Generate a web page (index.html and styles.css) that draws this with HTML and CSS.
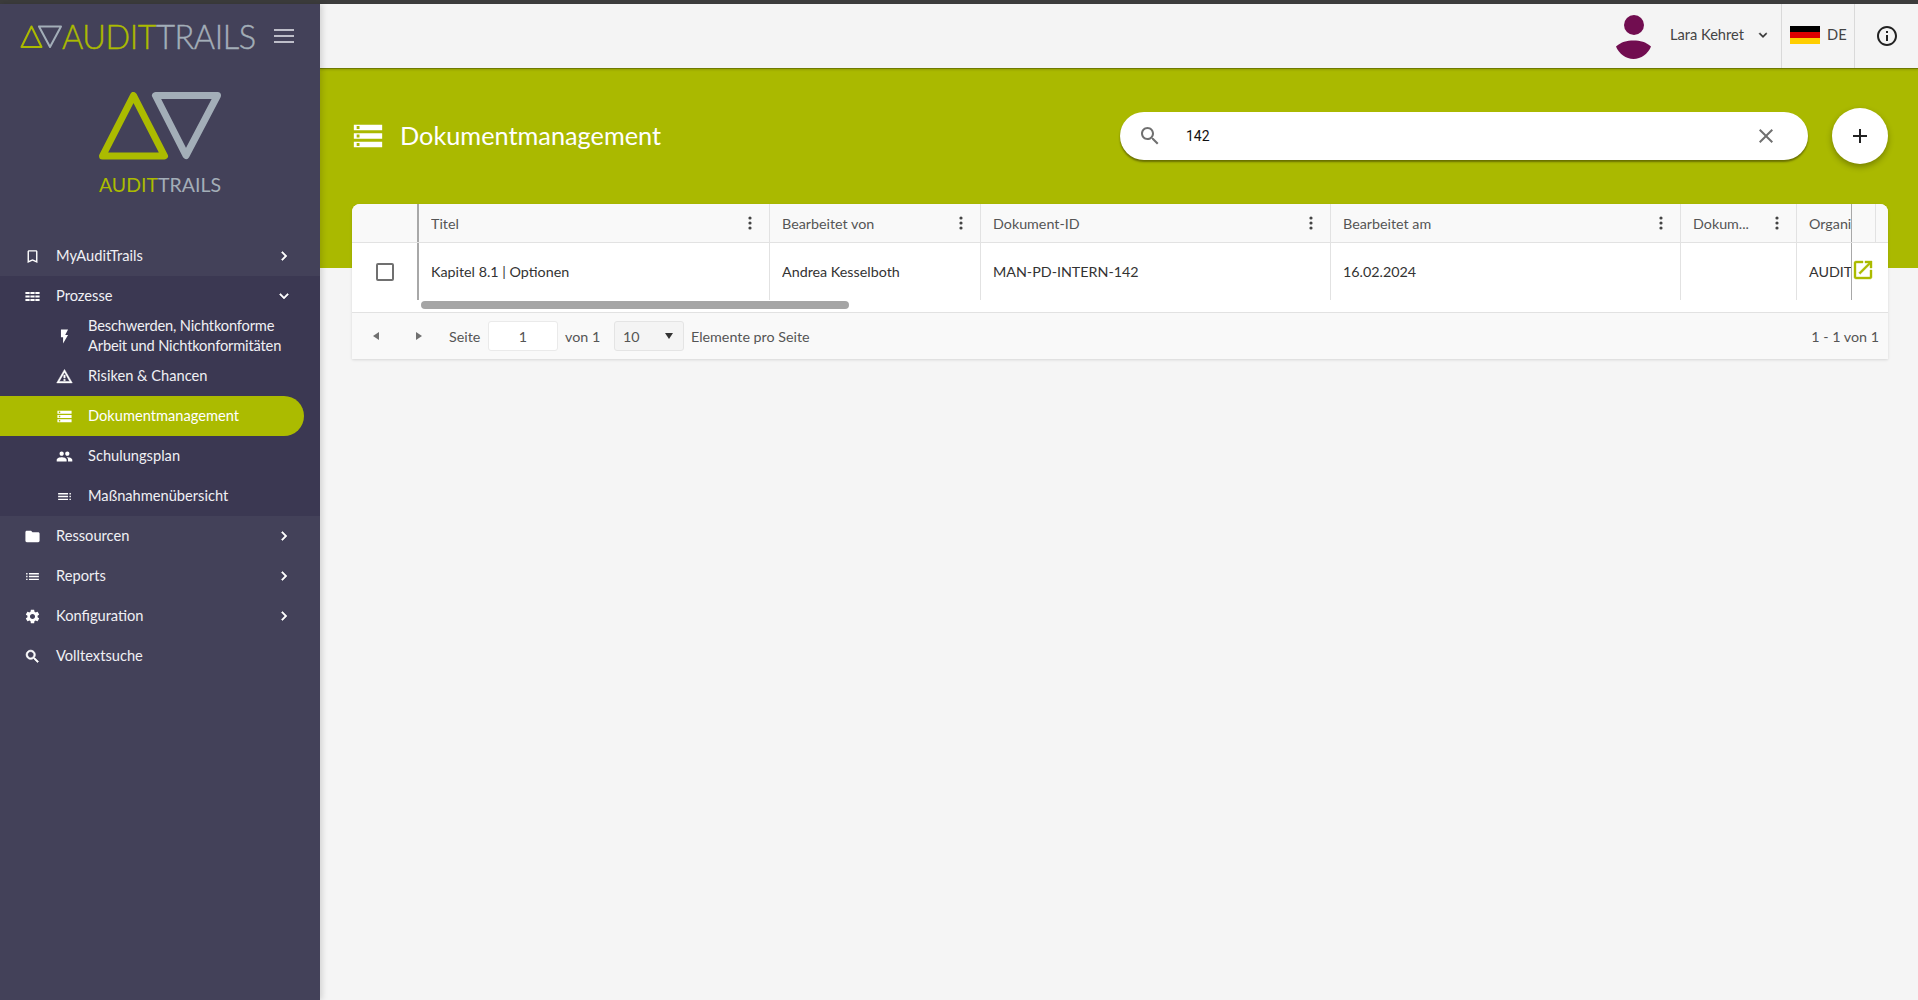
FILE: index.html
```html
<!DOCTYPE html>
<html lang="de">
<head>
<meta charset="utf-8">
<title>Dokumentmanagement</title>
<link rel="stylesheet" href="styles.css">
</head>
<body>
<svg class="defs" aria-hidden="true">
<symbol id="i-bookmark" viewBox="0 0 24 24"><path d="M17 3H7c-1.1 0-1.99.9-1.99 2L5 21l7-3 7 3V5c0-1.1-.9-2-2-2zm0 15l-5-2.18L7 18V5h10v13z"/></symbol>
<symbol id="i-right" viewBox="0 0 24 24"><path d="M10 6L8.59 7.41 13.17 12l-4.58 4.59L10 18l6-6z"/></symbol>
<symbol id="i-down" viewBox="0 0 24 24"><path d="M16.59 8.59L12 13.17 7.41 8.59 6 10l6 6 6-6z"/></symbol>
<symbol id="i-comfy" viewBox="0 0 24 24"><path d="M2 5.500h6v3H2zM9 5.500h6v3H9zM16 5.500h6v3h-6zM2 10.500h6v3H2zM9 10.500h6v3H9zM16 10.500h6v3h-6zM2 15.500h6v3H2zM9 15.500h6v3H9zM16 15.500h6v3h-6z"/></symbol>
<symbol id="i-flash" viewBox="0 0 24 24"><path d="M7 2v11h3v9l7-12h-4l4-8z"/></symbol>
<symbol id="i-warning" viewBox="0 0 24 24"><path d="M12 5.990L19.530 19H4.470L12 5.990M12 2L1 21h22L12 2zm1 14h-2v2h2v-2zm0-6h-2v4h2v-4z"/></symbol>
<symbol id="i-storage" viewBox="0 0 24 24"><path d="M2 20h20v-4H2v4zm2-3h2v2H4v-2zM2 4v4h20V4H2zm4 3H4V5h2v2zm-4 7h20v-4H2v4zm2-3h2v2H4v-2z"/></symbol>
<symbol id="i-people" viewBox="0 0 24 24"><path d="M16 11c1.66 0 2.99-1.34 2.99-3S17.66 5 16 5c-1.66 0-3 1.34-3 3s1.34 3 3 3zm-8 0c1.66 0 2.99-1.34 2.99-3S9.66 5 8 5C6.34 5 5 6.34 5 8s1.34 3 3 3zm0 2c-2.33 0-7 1.17-7 3.5V19h14v-2.5c0-2.33-4.67-3.5-7-3.5zm8 0c-.29 0-.62.02-.97.05 1.16.84 1.97 1.97 1.97 3.45V19h6v-2.5c0-2.33-4.67-3.5-7-3.5z"/></symbol>
<symbol id="i-list" viewBox="0 0 24 24"><path d="M3 13h2v-2H3v2zm0 4h2v-2H3v2zm0-8h2V7H3v2zm4 4h14v-2H7v2zm0 4h14v-2H7v2zM7 7v2h14V7H7z"/></symbol>
<symbol id="i-listr" viewBox="0 0 24 24"><path d="M21 13h-2v-2h2v2zm0 4h-2v-2h2v2zm0-8h-2V7h2v2zm-4 4H3v-2h14v2zm0 4H3v-2h14v2zM17 7v2H3V7h14z"/></symbol>
<symbol id="i-folder" viewBox="0 0 24 24"><path d="M10 4H4c-1.1 0-1.99.9-1.99 2L2 18c0 1.1.9 2 2 2h16c1.1 0 2-.9 2-2V8c0-1.1-.9-2-2-2h-8l-2-2z"/></symbol>
<symbol id="i-gear" viewBox="0 0 24 24"><path d="M19.14 12.94c.04-.3.06-.61.06-.94 0-.32-.02-.64-.07-.94l2.03-1.58c.18-.14.23-.41.12-.61l-1.92-3.32c-.12-.22-.37-.29-.59-.22l-2.39.96c-.5-.38-1.03-.7-1.62-.94l-.36-2.54c-.04-.24-.24-.41-.48-.41h-3.84c-.24 0-.43.17-.47.41l-.36 2.54c-.59.24-1.13.57-1.62.94l-2.39-.96c-.22-.08-.47 0-.59.22L2.74 8.87c-.12.21-.08.47.12.61l2.03 1.58c-.05.3-.09.63-.09.94s.02.64.07.94l-2.03 1.58c-.18.14-.23.41-.12.61l1.92 3.32c.12.22.37.29.59.22l2.39-.96c.5.38 1.03.7 1.62.94l.36 2.54c.05.24.24.41.48.41h3.84c.24 0 .44-.17.47-.41l.36-2.54c.59-.24 1.13-.56 1.62-.94l2.39.96c.22.08.47 0 .59-.22l1.92-3.32c.12-.22.07-.47-.12-.61l-2.01-1.58zM12 15.6c-1.98 0-3.6-1.62-3.6-3.6s1.62-3.6 3.6-3.6 3.6 1.62 3.6 3.6-1.62 3.6-3.6 3.6z"/></symbol>
<symbol id="i-search" viewBox="0 0 24 24"><path d="M15.5 14h-.79l-.28-.27C15.41 12.59 16 11.11 16 9.5 16 5.91 13.09 3 9.5 3S3 5.91 3 9.5 5.91 16 9.5 16c1.61 0 3.09-.59 4.23-1.57l.27.28v.79l5 4.99L20.49 19l-4.99-5zm-6 0C7.01 14 5 11.99 5 9.5S7.01 5 9.5 5 14 7.01 14 9.5 11.99 14 9.5 14z"/></symbol>
<symbol id="i-close" viewBox="0 0 24 24"><path d="M19 6.41L17.59 5 12 10.59 6.41 5 5 6.41 10.59 12 5 17.59 6.41 19 12 13.41 17.59 19 19 17.59 13.41 12z"/></symbol>
<symbol id="i-add" viewBox="0 0 24 24"><path d="M19 13h-6v6h-2v-6H5v-2h6V5h2v6h6v2z"/></symbol>
<symbol id="i-info" viewBox="0 0 24 24"><path d="M11 7h2v2h-2zm0 4h2v6h-2zm1-9C6.48 2 2 6.48 2 12s4.48 10 10 10 10-4.48 10-10S17.52 2 12 2zm0 18c-4.41 0-8-3.59-8-8s3.59-8 8-8 8 3.59 8 8-3.59 8-8 8z"/></symbol>
<symbol id="i-open" viewBox="0 0 24 24"><path d="M19 19H5V5h7V3H5c-1.11 0-2 .9-2 2v14c0 1.1.89 2 2 2h14c1.1 0 2-.9 2-2v-7h-2v7zM14 3v2h3.59l-9.83 9.83 1.41 1.41L19 6.41V10h2V3h-7z"/></symbol>
<symbol id="i-more" viewBox="0 0 16 16"><circle cx="8" cy="3" r="1.6"/><circle cx="8" cy="8" r="1.6"/><circle cx="8" cy="13" r="1.6"/></symbol>
</svg>

<div class="topline"></div>
<div class="app">
  <aside class="sidebar">
    <div class="brand">
      <svg class="brand-mark" viewBox="0 0 42 24"><path class="tri-g" d="M11.5 1.5 21.5 22H1.5Z"/><path class="tri-s" d="M19 1.5H41L30 22Z"/></svg>
      <div class="brand-word"><span class="w-g">AUDIT</span><span class="w-s">TRAILS</span></div>
      <svg class="burger" viewBox="0 0 20 14"><path d="M0 1h20M0 7h20M0 13h20"/></svg>
    </div>
    <div class="logo">
      <svg class="logo-mark" viewBox="0 0 122 68"><path class="big-g" d="M34.500 3.500 65.500 64H3.500Z"/><path class="big-s" d="M56.500 3.500H118.500L87 63.500Z"/></svg>
      <div class="logo-word"><span class="w-g">AUDIT</span><span class="w-s">TRAILS</span></div>
    </div>
    <nav class="nav">
      <a class="item"><svg class="ico"><use href="#i-bookmark"/></svg><span class="label">MyAuditTrails</span><svg class="chev"><use href="#i-right"/></svg></a>
      <div class="group">
        <a class="item"><svg class="ico"><use href="#i-comfy"/></svg><span class="label">Prozesse</span><svg class="chev"><use href="#i-down"/></svg></a>
        <a class="item sub"><svg class="ico"><use href="#i-flash"/></svg><span class="label long">Beschwerden, Nichtkonforme<br>Arbeit und Nichtkonformitäten</span></a>
        <a class="item sub"><svg class="ico heavy"><use href="#i-warning"/></svg><span class="label">Risiken &amp; Chancen</span></a>
        <a class="item sub active"><svg class="ico"><use href="#i-storage"/></svg><span class="label">Dokumentmanagement</span></a>
        <a class="item sub"><svg class="ico"><use href="#i-people"/></svg><span class="label">Schulungsplan</span></a>
        <a class="item sub"><svg class="ico"><use href="#i-listr"/></svg><span class="label">Maßnahmenübersicht</span></a>
      </div>
      <a class="item"><svg class="ico"><use href="#i-folder"/></svg><span class="label">Ressourcen</span><svg class="chev"><use href="#i-right"/></svg></a>
      <a class="item"><svg class="ico"><use href="#i-list"/></svg><span class="label">Reports</span><svg class="chev"><use href="#i-right"/></svg></a>
      <a class="item"><svg class="ico"><use href="#i-gear"/></svg><span class="label">Konfiguration</span><svg class="chev"><use href="#i-right"/></svg></a>
      <a class="item"><svg class="ico bold"><use href="#i-search"/></svg><span class="label">Volltextsuche</span></a>
    </nav>
  </aside>

  <main class="main">
    <header class="topbar">
      <div class="user">
        <svg class="avatar" viewBox="0 0 35 44"><circle cx="18" cy="10" r="10"/><path d="M0 31.500C5 27 11 25.500 17.500 25.500S30 27 35 31.500C32 39 25 44 17.500 44S3 39 0 31.500Z"/></svg>
        <span class="user-name">Lara Kehret</span>
        <svg class="user-chev"><use href="#i-down"/></svg>
      </div>
      <div class="lang">
        <div class="flag"><i class="f-b"></i><i class="f-r"></i><i class="f-y"></i></div>
        <span>DE</span>
      </div>
      <div class="info"><svg><use href="#i-info"/></svg></div>
    </header>

    <section class="hero">
      <div class="hero-title">
        <svg class="hero-ico"><use href="#i-storage"/></svg>
        <h1>Dokumentmanagement</h1>
      </div>
      <div class="search">
        <svg class="s-ico"><use href="#i-search"/></svg>
        <span class="s-text">142</span>
        <svg class="s-close"><use href="#i-close"/></svg>
      </div>
      <button class="fab"><svg><use href="#i-add"/></svg></button>
    </section>

    <section class="card">
      <div class="grid head">
        <div class="cell select strong"></div>
        <div class="cell"><span class="ct">Titel</span><svg class="more"><use href="#i-more"/></svg></div>
        <div class="cell"><span class="ct">Bearbeitet von</span><svg class="more"><use href="#i-more"/></svg></div>
        <div class="cell"><span class="ct">Dokument-ID</span><svg class="more"><use href="#i-more"/></svg></div>
        <div class="cell"><span class="ct">Bearbeitet am</span><svg class="more"><use href="#i-more"/></svg></div>
        <div class="cell"><span class="ct">Dokum...</span><svg class="more"><use href="#i-more"/></svg></div>
        <div class="cell clip"><span class="ct">Organi</span></div>
        <div class="cell pin strong"></div>
        <div class="cell tail"></div>
      </div>
      <div class="grid row">
        <div class="cell select strong"><span class="check"></span></div>
        <div class="cell"><span class="ct">Kapitel 8.1 | Optionen</span></div>
        <div class="cell"><span class="ct">Andrea Kesselboth</span></div>
        <div class="cell"><span class="ct">MAN-PD-INTERN-142</span></div>
        <div class="cell"><span class="ct">16.02.2024</span></div>
        <div class="cell"></div>
        <div class="cell clip"><span class="ct">AUDIT</span></div>
        <div class="cell pin strong span2"><svg class="open"><use href="#i-open"/></svg></div>
      </div>
      <div class="hscroll"><div class="thumb"></div></div>
      <footer class="pager">
        <span class="tri left"></span>
        <span class="tri right"></span>
        <span class="p-seite">Seite</span>
        <span class="p-input">1</span>
        <span class="p-von">von 1</span>
        <span class="p-select">10<i class="caret"></i></span>
        <span class="p-per">Elemente pro Seite</span>
        <span class="p-range">1 - 1 von 1</span>
      </footer>
    </section>
  </main>
</div>
</body>
</html>
```

FILE: styles.css
```css
* { box-sizing: border-box; }
html, body { margin: 0; height: 1000px; overflow: hidden; }
body { font-family: "Lato", "Liberation Sans", sans-serif; font-size: 14.300px; background: #f5f5f5; color: #333; }
.defs { width: 0; height: 0; position: absolute; }
.topline { height: 4px; background: #3c3c3c; }
.app { display: flex; height: 996px; }

/* Sidebar */
.sidebar { width: 320px; flex: none; background: #434159; color: #f0f0f4; box-shadow: 2px 0 6px rgba(0,0,0,.15); position: relative; z-index: 2; }
.brand { height: 64px; display: flex; align-items: center; padding-left: 20px; }
.brand-mark { width: 42px; height: 24px; fill: none; stroke-width: 2; stroke-linejoin: round; margin-top: 2px; }
.tri-g { stroke: #abbb00; }
.tri-s { stroke: #a3aeb8; }
.brand-word { font-size: 32.500px; font-weight: 300; line-height: 40px; letter-spacing: -.45px; -webkit-text-stroke: .4px; width: 194px; white-space: nowrap; margin-top: 1px; }
.w-g { color: #abbb00; }
.w-s { color: #a3aeb8; }
.burger { width: 20px; height: 14px; margin-left: 18px; fill: none; stroke: #e8e8ee; stroke-width: 1.700; }
.logo { margin-top: 24px; height: 144px; display: flex; flex-direction: column; align-items: center; }
.logo-mark { width: 122px; height: 68px; fill: none; stroke-linejoin: round; stroke-width: 7; }
.big-g { stroke: #abbb00; }
.big-s { stroke: #a3aeb8; }
.logo-word { font-size: 19.500px; font-weight: 400; line-height: 20px; margin-top: 15px; white-space: nowrap; }
.nav { display: block; }
.item { height: 40px; display: flex; align-items: center; padding-left: 24px; position: relative; line-height: 20px; font-size: 14.650px; color: #f0f0f4; }
.item .ico { width: 17px; height: 17px; fill: #fff; flex: none; margin-right: 15px; }
.item .ico.bold { stroke: #fff; stroke-width: 1; }
.item .ico.heavy { stroke: #fff; stroke-width: .7; }
.item .label { flex: 1; white-space: nowrap; margin-top: -1px; }
.item .label.long { letter-spacing: -.16px; }
.item .chev { width: 18px; height: 18px; fill: #fff; stroke: #fff; stroke-width: .7; flex: none; margin-right: 27px; }
.group { background: #3b3852; }
.item.sub { padding-left: 56px; }
.item.active { background: #abbb00; width: 304px; border-radius: 0 20px 20px 0; color: #fff; }

/* Main */
.main { flex: 1; min-width: 0; }
.topbar { height: 65px; background: #f4f4f4; border-bottom: 1px solid #6f7a00; display: flex; justify-content: flex-end; align-items: stretch; box-shadow: 0 1px 2px rgba(0,0,0,.15); position: relative; }
.user { display: flex; align-items: center; }
.avatar { width: 35px; height: 44px; fill: #710d50; margin-right: 19px; margin-top: 1px; }
.user-name { font-size: 14.650px; color: #444; margin-top: -4px; }
.user-chev { width: 16px; height: 16px; fill: #333; stroke: #333; stroke-width: .6; margin-left: 11px; margin-right: 10px; margin-top: -2px; }
.lang { width: 73px; border-left: 1px solid #d9d9d9; display: flex; align-items: center; padding-left: 8px; color: #444; font-size: 14.650px; }
.lang span { margin-left: 7px; margin-top: -4px; }
.flag { width: 30px; height: 18px; display: flex; flex-direction: column; margin-top: -3px; }
.flag i { flex: 1; display: block; }
.f-b { background: #000; }
.f-r { background: #dd0000; }
.f-y { background: #ffce00; }
.info { width: 64px; border-left: 1px solid #d9d9d9; display: flex; align-items: center; justify-content: center; }
.info svg { width: 24px; height: 24px; fill: #222; margin-top: -1px; }
.hero { height: 199px; background: #aab900; display: flex; align-items: flex-start; padding: 43px 30px 0 34px; }
.hero-title { flex: 1; display: flex; align-items: center; height: 48px; }
.hero-ico { width: 34px; height: 34px; fill: #fff; margin-left: -3px; margin-right: 15px; }
.hero-title h1 { margin: 0; font-size: 25.300px; font-weight: 400; color: #fff; line-height: 34px; margin-top: -2px; }
.search { width: 688px; height: 48px; border-radius: 24px; background: #fff; display: flex; align-items: center; padding: 0 30px 0 18px; box-shadow: 0 2px 2px rgba(60,60,0,.6); }
.s-ico { width: 24px; height: 24px; fill: #707070; margin-right: 24px; }
.s-text { flex: 1; font-family: "Roboto", sans-serif; font-size: 14px; color: #111; }
.s-close { width: 24px; height: 24px; fill: #707070; }
.fab { width: 56px; height: 56px; border: 0; border-radius: 50%; background: #fff; margin: -4px 0 0 24px; padding: 0; display: flex; align-items: center; justify-content: center; box-shadow: 0 3px 6px rgba(0,0,0,.3); }
.fab svg { width: 24px; height: 24px; fill: #222; }

/* Table */
.card { margin: -64px 30px 0 32px; position: relative; background: #fff; border-radius: 8px 8px 0 0; box-shadow: 0 1px 3px rgba(0,0,0,.12); overflow: hidden; }
.grid { display: grid; grid-template-columns: 67px 351px 211px 350px 350px 116px 54px 25px 12px; }
.head { height: 39px; background: #f9f9f9; border-bottom: 1px solid #e2e2e2; color: #555; }
.row { height: 59px; }
.row .cell { height: 57px; }
.cell { border-right: 1px solid #e2e2e2; display: flex; align-items: center; padding: 0 11px 0 12px; min-width: 0; font-size: 14.300px; }
.head .cell { height: 38px; }
.cell.strong { border-right: 0; }
.select { border-right: 2px solid #a8a8a8 !important; padding: 0; justify-content: center; }
.ct { flex: 1; white-space: nowrap; overflow: hidden; }
.clip { border-right: 0; padding-right: 0; overflow: hidden; }
.clip .ct { overflow: visible; }
.pin { border-left: 1px solid #a8a8a8; padding: 0; background: #fff; position: relative; }
.head .pin { background: #f9f9f9; border-right: 1px solid #e2e2e2 !important; }
.tail { border-right: 0; }
.span2 { grid-column: span 2; }
.more { width: 16px; height: 16px; fill: #444; flex: none; }
.check { width: 18px; height: 18px; border: 2px solid #707070; border-radius: 2px; }
.open { width: 24px; height: 24px; fill: #abbb00; stroke: #abbb00; stroke-width: .4; margin-top: -4px; margin-left: -1px; }
.hscroll { height: 10px; padding: 0 0 0 69px; margin-top: -1px; }
.thumb { width: 428px; height: 8px; border-radius: 4px; background: #a5a5a5; }
.pager { height: 47px; margin-top: 1px; border-top: 1px solid #e2e2e2; background: #f9f9f9; display: flex; align-items: center; padding: 0 9px 0 21px; color: #555; font-size: 14.300px; }
.tri { width: 0; height: 0; border-top: 4px solid transparent; border-bottom: 4px solid transparent; }
.tri.left { border-right: 6px solid #707070; }
.tri.right { border-left: 6px solid #707070; margin-left: 37px; }
.p-seite { margin-left: 27px; width: 32px; white-space: nowrap; }
.p-input { width: 70px; height: 30px; background: #fff; border: 1px solid #eaeaea; border-radius: 3px; margin-left: 7px; display: flex; align-items: center; justify-content: center; }
.p-von { margin-left: 7px; width: 33px; white-space: nowrap; }
.p-select { width: 70px; height: 30px; background: #f4f4f4; border: 1px solid #e4e4e4; border-radius: 3px; margin-left: 16px; display: flex; align-items: center; justify-content: space-between; padding: 0 10px 0 8px; }
.caret { width: 0; height: 0; border-left: 4px solid transparent; border-right: 4px solid transparent; border-top: 6px solid #333; }
.p-per { margin-left: 7px; }
.p-range { margin-left: auto; }
```
